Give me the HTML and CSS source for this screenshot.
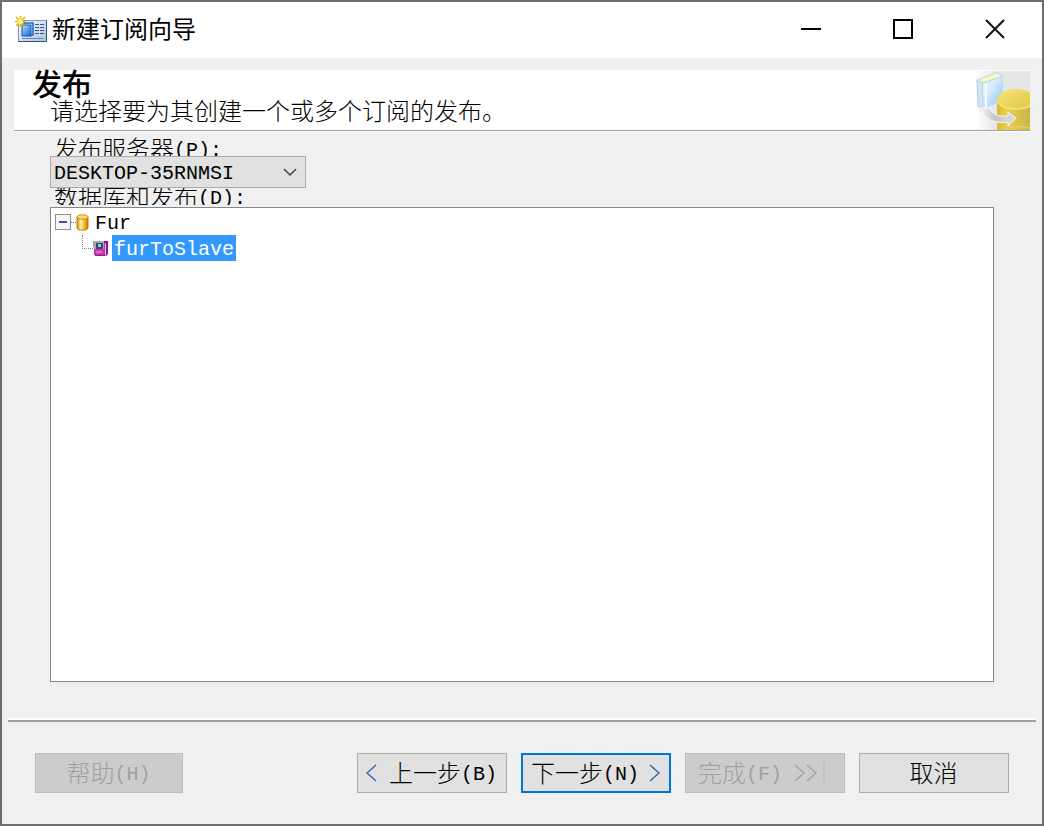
FILE: index.html
```html
<!DOCTYPE html>
<html lang="zh-CN">
<head>
    <meta charset="UTF-8">
    <meta name="viewport" content="width=device-width, initial-scale=1.0">
    <title>新建订阅向导</title>
    <link rel="stylesheet" href="styles.css">
</head>
<body>

<div class="window">
    <header class="title-bar">
        <svg class="title-icon" width="33" height="28" viewBox="0 0 33 28">
            <defs>
                <linearGradient id="card" x1="0" y1="0" x2="1" y2="1">
                    <stop offset="0" stop-color="#ffffff"/>
                    <stop offset="1" stop-color="#a9bfe4"/>
                </linearGradient>
                <linearGradient id="page" x1="0" y1="0" x2="1" y2="1">
                    <stop offset="0" stop-color="#a5dcff"/>
                    <stop offset="1" stop-color="#1766cc"/>
                </linearGradient>
            </defs>
            <rect x="3.5" y="4.5" width="28" height="21" fill="url(#card)" stroke="#8296ba"/>
            <path d="M31.5 4.5v21h-28" fill="none" stroke="#31507f"/>
            <path d="M7 22.5h21" stroke="#6e82a8"/>
            <rect x="9" y="7" width="9" height="12" fill="#dcefff" stroke="#1b66c4" stroke-width="1.5"/>
            <rect x="7" y="9" width="9" height="11" fill="url(#page)" stroke="#1459b0"/>
            <path d="M20 8.5h4m1 0h4M20 11.5h4m1 0h4M20 14.5h4m1 0h4M20 17.5h4m1 0h4" stroke="#46566f"/>
            <path d="M5.5 0v11M0 5.5h11M1 1l9 9M10 1L1 10" stroke="#e8b400" stroke-width="1.5"/>
            <circle cx="5.5" cy="5.5" r="2.5" fill="#fff27a"/>
        </svg>
        <h1 class="title-text">新建订阅向导</h1>
        <div class="title-buttons">
            <button type="button" class="title-button" aria-label="最小化">
                <svg width="20" height="20" viewBox="0 0 20 20"><path d="M0 10h20" stroke="#000" stroke-width="2"/></svg>
            </button>
            <button type="button" class="title-button" aria-label="最大化">
                <svg width="20" height="20" viewBox="0 0 20 20"><rect x="1" y="1" width="18" height="18" fill="none" stroke="#000" stroke-width="2"/></svg>
            </button>
            <button type="button" class="title-button" aria-label="关闭">
                <svg width="20" height="20" viewBox="0 0 20 20"><path d="M1 1l18 18M19 1L1 19" stroke="#111" stroke-width="2"/></svg>
            </button>
        </div>
    </header>

    <section class="banner">
        <div class="banner-text">
            <h2>发布</h2>
            <p>请选择要为其创建一个或多个订阅的发布。</p>
        </div>
        <svg class="banner-icon" width="56" height="59" viewBox="0 0 56 59">
            <defs>
                <linearGradient id="fade">
                    <stop offset="0" stop-color="#ffffff"/>
                    <stop offset="0.4" stop-color="#e6e6e6"/>
                </linearGradient>
                <linearGradient id="book" x1="0" y1="0" x2="1" y2="1">
                    <stop offset="0" stop-color="#edf6fe"/>
                    <stop offset="0.4" stop-color="#d8ebfb"/>
                    <stop offset="0.7" stop-color="#a9d6fb"/>
                    <stop offset="1" stop-color="#e4f2fd"/>
                </linearGradient>
                <linearGradient id="drum">
                    <stop offset="0" stop-color="#d9bb32"/>
                    <stop offset="0.3" stop-color="#ead04a"/>
                    <stop offset="1" stop-color="#c9b64a"/>
                </linearGradient>
                <linearGradient id="drumTop" x1="0" y1="0" x2="1" y2="1">
                    <stop offset="0" stop-color="#f5e57a"/>
                    <stop offset="1" stop-color="#dfc53e"/>
                </linearGradient>
                <linearGradient id="arrow">
                    <stop offset="0" stop-color="#fafafa"/>
                    <stop offset="0.4" stop-color="#c6c6c6"/>
                    <stop offset="1" stop-color="#dedede"/>
                </linearGradient>
            </defs>
            <rect width="56" height="59" fill="url(#fade)"/>
            <path d="M3 9l6 3v26l-5-3z" fill="#d6e3f2" stroke="#b4cbe6"/>
            <path d="M9 12l20-7v24L10 38z" fill="url(#book)"/>
            <path d="M3 9l20-7.5 6 3.5-20 7z" fill="#f8f9c0" stroke="#b8d3ee"/>
            <path d="M12 13v24" stroke="#f5fbff" stroke-width="2"/>
            <path d="M23 28v31h33V28z" fill="url(#drum)"/>
            <ellipse cx="42" cy="28" rx="19" ry="10" fill="url(#drumTop)"/>
            <path d="M23 29c2 12 36 12 38 0" fill="none" stroke="#f3e68a" stroke-width="1.5"/>
            <path d="M28 59c5-4 20-4 28-2" fill="none" stroke="#e4d479"/>
            <path d="M6 37h9c3 6 9 9 19 8v-4l8 6-8 8v-4c-12 2-24-2-28-14z" fill="url(#arrow)" stroke="#f6f6f6"/>
        </svg>
    </section>

    <form class="wizard-form">
        <label class="field-label" for="publisher">发布服务器<span class="latin">(P):</span></label>
        <div class="combo">
            <select id="publisher" name="publisher">
                <option>DESKTOP-35RNMSI</option>
            </select>
            <svg class="combo-arrow" width="14" height="8" viewBox="0 0 14 8"><path d="M1 1l6 6 6-6" fill="none" stroke="#444" stroke-width="1.5"/></svg>
        </div>
        <div class="field-label field-label-low" id="treeLabel">数据库和发布<span class="latin">(D):</span></div>
        <ul class="tree" role="tree" aria-labelledby="treeLabel">
            <li role="treeitem" aria-expanded="true">
                <div class="tree-row">
                    <button type="button" class="tree-toggle" aria-label="折叠">
                        <svg width="16" height="16" viewBox="0 0 16 16">
                            <rect x="0.5" y="0.5" width="15" height="15" fill="#f6f6f6" stroke="#919191"/>
                            <path d="M4 8h8" stroke="#3a55a5" stroke-width="2"/>
                        </svg>
                    </button>
                    <span class="tree-dots"></span>
                    <svg width="13" height="17" viewBox="0 0 13 17">
                        <defs>
                            <linearGradient id="db">
                                <stop offset="0" stop-color="#d99516"/>
                                <stop offset="0.35" stop-color="#fff0a0"/>
                                <stop offset="0.7" stop-color="#eeb02c"/>
                                <stop offset="1" stop-color="#c47c08"/>
                            </linearGradient>
                        </defs>
                        <path d="M1 3v11c0 3 11 3 11 0V3z" fill="url(#db)" stroke="#b87a14"/>
                        <ellipse cx="6.5" cy="3" rx="5.5" ry="2.2" fill="#ffd96a" stroke="#c98e28"/>
                    </svg>
                    <span class="tree-name">Fur</span>
                </div>
                <ul class="tree-children" role="group">
                    <li class="tree-row" role="treeitem" aria-selected="true">
                        <span class="tree-elbow"></span>
                        <svg width="15" height="17" viewBox="0 0 15 17">
                            <path d="M2 3l2-2h11v13l-2 2H2z" fill="#8c1a7c"/>
                            <rect x="1" y="3" width="11" height="12" fill="#c536ae"/>
                            <path d="M12 4l1-1v12l-1 1z" fill="#e9b4e2"/>
                            <path d="M0 1h11v8H2L0 7z" fill="#a4a9b2"/>
                            <path d="M3 3h7v6H3z" fill="#34496f"/>
                            <path d="M5 4h3v3H5z" fill="#8fcdf0"/>
                            <path d="M3 12h6" stroke="#e26bcf" stroke-width="2"/>
                        </svg>
                        <span class="tree-name selected">furToSlave</span>
                    </li>
                </ul>
            </li>
        </ul>
    </form>

    <footer class="footer">
        <button type="button" class="button button-help" disabled>
            <span class="button-text">帮助<span class="latin">(H)</span></span>
        </button>
        <button type="button" class="button">
            <svg width="11" height="18" viewBox="0 0 11 18"><path d="M10 1L1 9l9 8" fill="none" stroke="#2c6ba5" stroke-width="1.5"/></svg>
            <span class="button-text">上一步<span class="latin">(B)</span></span>
        </button>
        <button type="button" class="button button-default">
            <span class="button-text">下一步<span class="latin">(N)</span></span>
            <svg width="11" height="18" viewBox="0 0 11 18"><path d="M1 1l9 8-9 8" fill="none" stroke="#2c6ba5" stroke-width="1.5"/></svg>
        </button>
        <button type="button" class="button button-finish" disabled>
            <span class="button-text">完成<span class="latin">(F)</span></span>
            <svg width="31" height="24" viewBox="0 0 31 24"><path d="M1 4l9 8-9 8M13 4l9 8-9 8" fill="none" stroke="#a0a6aa" stroke-width="1.5"/><path d="M30 0v24" stroke="#bac2c6" stroke-width="2"/></svg>
        </button>
        <button type="button" class="button button-cancel">
            <span class="button-text">取消</span>
        </button>
    </footer>
</div>

</body>
</html>
```
FILE: styles.css
```css
* {
    box-sizing: border-box;
}

body {
    margin: 0;
    font-family: "Liberation Serif", "Noto Sans CJK SC", sans-serif;
    font-size: 24px;
    font-weight: 300;
    color: #000;
}

h1, h2, p, ul {
    margin: 0;
    padding: 0;
}

ul {
    list-style: none;
}

svg {
    display: block;
    flex-shrink: 0;
}

button, select {
    font: inherit;
    color: inherit;
}

.latin {
    font-family: "Liberation Mono", monospace;
    font-size: 20px;
    line-height: 16px;
    vertical-align: 2px;
}

.window {
    display: flex;
    flex-direction: column;
    min-height: 100vh;
    border: 2px solid #6e6e6e;
    background-color: #f0f0f0;
}

/* title bar */
.title-bar {
    display: flex;
    align-items: center;
    height: 56px;
    padding: 0 1px 0 13px;
    background-color: #fff;
}

.title-text {
    margin-left: 4px;
    font-size: 24px;
    font-weight: 400;
    line-height: 32px;
}

.title-buttons {
    display: flex;
    align-self: stretch;
    margin-left: auto;
}

.title-button {
    display: flex;
    align-items: center;
    justify-content: center;
    width: 92px;
    padding: 0 0 2px;
    border: none;
    background: none;
}

.title-button:hover {
    background-color: #e5e5e5;
}

/* page heading */
.banner {
    display: flex;
    justify-content: space-between;
    align-items: flex-end;
    height: 62px;
    margin: 12px 12px 0;
    padding-left: 18px;
    background-color: #fff;
    border-bottom: 1px solid #fff;
    box-shadow: inset 0 -1px #a0a0a0;
}

.banner-icon {
    margin-bottom: 1px;
}

.banner-text {
    align-self: flex-start;
}

.banner h2 {
    font-size: 30px;
    font-weight: 500;
    line-height: 30px;
}

.banner p {
    padding-left: 18px;
    line-height: 24px;
}

/* form */
.wizard-form {
    flex: 1;
    display: flex;
    flex-direction: column;
    padding: 4px 48px 36px;
}

.field-label {
    height: 20px;
    padding-left: 4px;
    line-height: 28px;
    overflow: hidden;
}

.field-label-low {
    height: 17px;
    margin-bottom: 2px;
    line-height: 20px;
}

.combo {
    position: relative;
    width: 256px;
}

.combo select {
    display: block;
    width: 100%;
    height: 32px;
    padding: 2px 3px 0;
    border: 1px solid #acacac;
    border-radius: 0;
    background-color: #e1e1e1;
    font-family: "Liberation Mono", monospace;
    font-size: 20px;
    appearance: none;
}

.combo-arrow {
    position: absolute;
    top: 12px;
    right: 9px;
    pointer-events: none;
}

.tree {
    flex: 1;
    padding: 1px 4px;
    border: 1px solid #828790;
    background-color: #fff;
    font-family: "Liberation Mono", monospace;
    font-size: 20px;
}

.tree-row {
    display: flex;
    align-items: center;
    height: 26px;
}

.tree-toggle {
    padding: 0;
    border: none;
    background: none;
}

.tree-dots {
    width: 5px;
    border-top: 1px dotted #808080;
}

.tree-name {
    margin-left: 4px;
    padding: 4px 2px 0;
    line-height: 22px;
}

.tree-name.selected {
    background-color: #3399ff;
    color: #fff;
}

.tree-children {
    padding-left: 27px;
}

.tree-elbow {
    align-self: flex-start;
    width: 11px;
    height: 14px;
    border-left: 1px dotted #808080;
    border-bottom: 1px dotted #808080;
}

/* wizard buttons */
.footer {
    display: flex;
    gap: 14px;
    margin: 0 6px;
    padding: 33px 27px 31px;
    border-top: 2px solid #fff;
    box-shadow: inset 0 2px #a0a0a0;
}

.button {
    display: flex;
    align-items: center;
    justify-content: space-between;
    width: 150px;
    height: 40px;
    padding: 0 9px 0 8px;
    border: 1px solid #adadad;
    background-color: #e1e1e1;
    line-height: 32px;
    white-space: nowrap;
}

.button-text {
    padding-top: 2px;
}

.button:disabled {
    border-color: #bfbfbf;
    background-color: #cccccc;
    color: #a0a0a0;
}

.button-default {
    border: 2px solid #0078d7;
}

.button-help {
    width: 148px;
    margin-right: auto;
    justify-content: center;
}

.button-finish {
    width: 160px;
    padding: 0 19px 0 12px;
}

.button-cancel {
    justify-content: center;
}
```
